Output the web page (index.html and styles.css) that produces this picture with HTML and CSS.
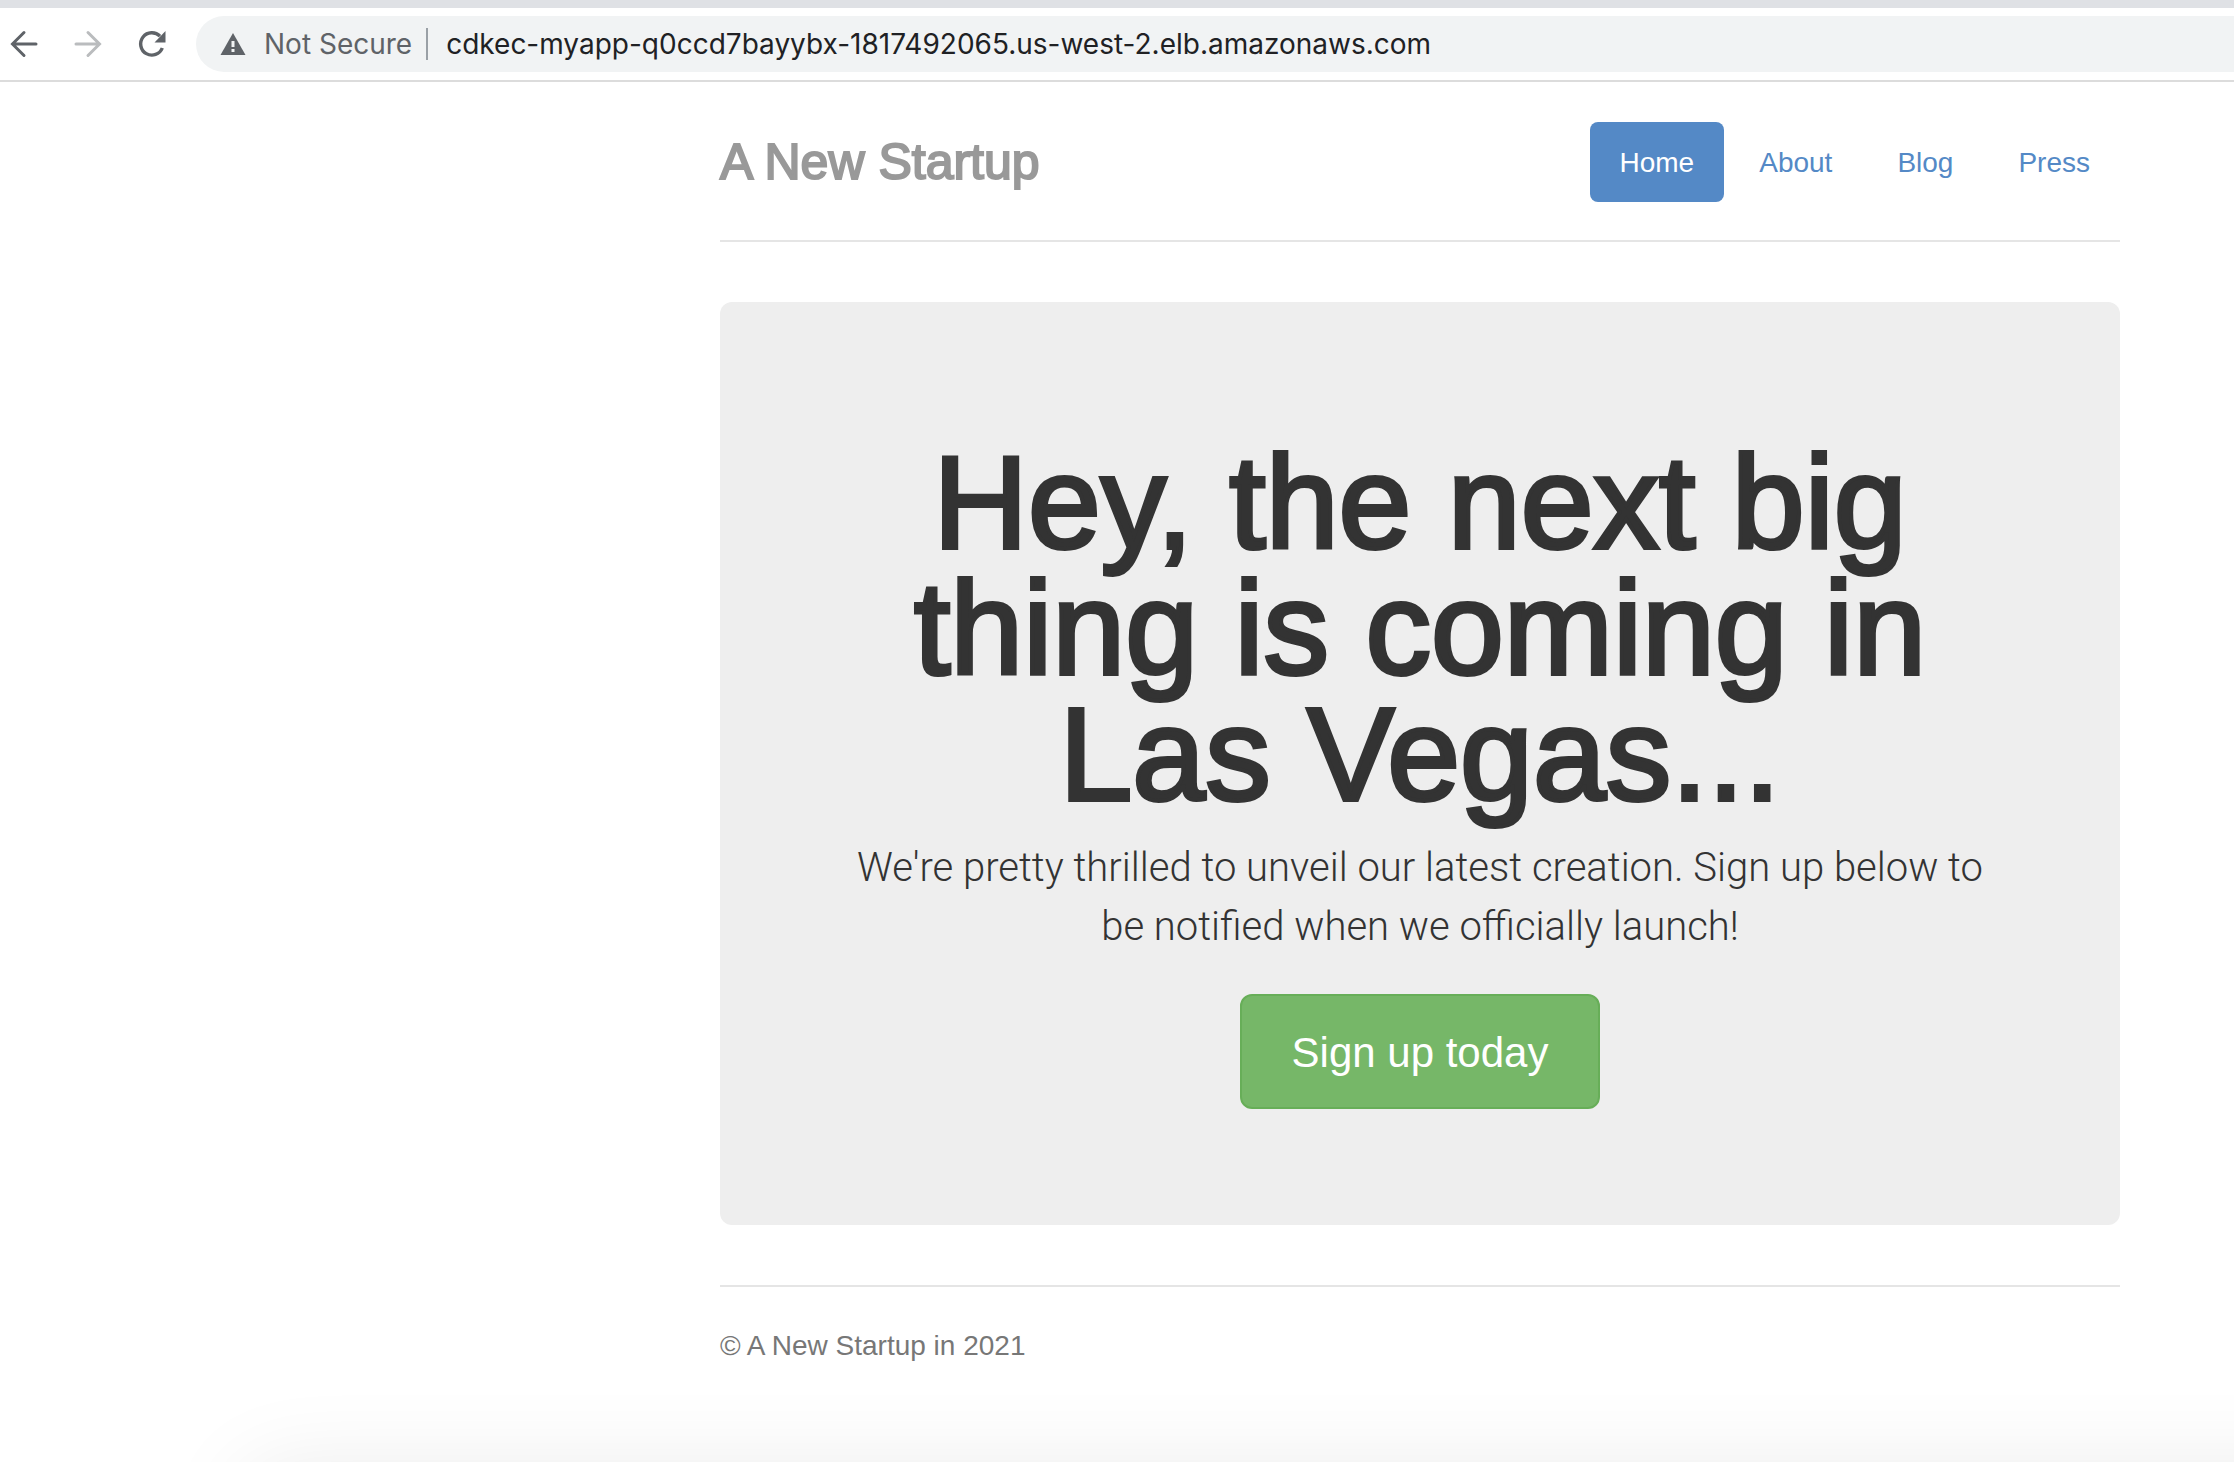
FILE: index.html
```
<!DOCTYPE html>
<html lang="en">
<head>
<meta charset="utf-8">
<meta name="viewport" content="width=device-width, initial-scale=1">
<title>A New Startup</title>
<link rel="stylesheet" href="styles.css">
</head>
<body>
<div class="toolbar">
  <button class="tool" type="button" aria-label="Back">
    <svg width="32" height="32" viewBox="0 0 32 32" fill="none" stroke="currentColor" stroke-width="3" stroke-linecap="round"><path d="M28 16H5M16 4.500L4.500 16L16 27.500"/></svg>
  </button>
  <button class="tool tool-off" type="button" aria-label="Forward" disabled>
    <svg width="32" height="32" viewBox="0 0 32 32" fill="none" stroke="currentColor" stroke-width="3" stroke-linecap="round"><path d="M4 16H27M16 4.500L27.500 16L16 27.500"/></svg>
  </button>
  <button class="tool" type="button" aria-label="Reload">
    <svg width="32" height="32" viewBox="0 0 32 32"><path d="M26.300 20A11.200 11.200 0 1 1 24 8.200" fill="none" stroke="currentColor" stroke-width="3.400"/><path d="M29.500 3V14.500H18.500Z" fill="currentColor"/></svg>
  </button>
  <div class="omnibox">
    <svg class="warning" width="26" height="24" viewBox="0 0 26 24"><path d="M13 1L25.500 23H.500Z" fill="currentColor"/><path d="M11.500 9h3v6h-3zM11.500 17h3v3h-3z" fill="#f1f3f4"/></svg>
    <label class="security" for="address">Not Secure</label>
    <input class="address" id="address" type="text" value="cdkec-myapp-q0ccd7bayybx-1817492065.us-west-2.elb.amazonaws.com">
  </div>
</div>
<div class="container">
  <header class="header">
    <h3 class="brand">A New Startup</h3>
    <nav class="nav">
      <a class="nav-link active" href="#">Home</a>
      <a class="nav-link" href="#about">About</a>
      <a class="nav-link" href="#blog">Blog</a>
      <a class="nav-link" href="#press">Press</a>
    </nav>
  </header>
  <main class="jumbotron">
    <h1 class="headline">Hey, the next big thing is coming in Las Vegas...</h1>
    <p class="lead">We're pretty thrilled to unveil our latest creation. Sign up below to be notified when we officially launch!</p>
    <button class="signup" type="button">Sign up today</button>
  </main>
  <footer class="footer">© A New Startup in 2021</footer>
</div>
<div class="window-shadow"></div>
</body>
</html>
```
FILE: styles.css
```
* {
  box-sizing: border-box;
}

body {
  margin: 0;
  min-height: 100vh;
  background: #fff;
  color: #333;
  font-family: "Liberation Sans", Arial, sans-serif;
  font-size: 28px;
  line-height: 40px;
}

.toolbar {
  display: flex;
  align-items: center;
  gap: 32px;
  padding: 8px 0 8px 8px;
  border-top: 8px solid #dfe1e5;
  border-bottom: 2px solid #dcdcdc;
}

.tool {
  display: flex;
  padding: 0;
  border: 0;
  background: none;
  color: #5f6368;
}

.tool-off {
  color: #babcbe;
}

.omnibox {
  display: flex;
  flex: 1;
  align-items: center;
  height: 56px;
  margin-left: -4px;
  padding-left: 24px;
  border-radius: 28px 0 0 28px;
  background: #f1f3f4;
  color: #5f6368;
  font-family: Inter, sans-serif;
  font-size: 28px;
  line-height: 32px;
}

.security {
  margin-left: 18px;
  padding-right: 14px;
  border-right: 2px solid #9aa0a6;
}

.address {
  flex: 1;
  min-width: 0;
  padding: 0 0 0 18px;
  border: 0;
  outline: 0;
  background: none;
  color: #202124;
  font: inherit;
}

.container {
  max-width: 1400px;
  margin: 0 114px 0 auto;
  padding-top: 40px;
}

.header {
  display: flex;
  align-items: center;
  justify-content: space-between;
  padding-bottom: 38px;
  border-bottom: 2px solid #e5e5e5;
}

.brand {
  margin: 0;
  color: #999;
  font-size: 50px;
  font-weight: 400;
  line-height: 80px;
  -webkit-text-stroke: 2px currentColor;
}

.nav {
  display: flex;
  gap: 5px;
}

.nav-link {
  padding: 21px 30px 19px;
  border-radius: 8px;
  color: #5489c6;
  text-decoration: none;
}

.nav-link.active {
  background: #5489c6;
  color: #fff;
}

.jumbotron {
  margin: 60px 0;
  padding: 138px 120px 116px;
  border-radius: 12px;
  background: #eee;
  text-align: center;
}

.headline {
  margin: 0 0 20px;
  font-size: 131px;
  font-weight: 400;
  line-height: 126px;
  -webkit-text-stroke: 4px currentColor;
}

.lead {
  margin: 0 0 38px;
  font-family: Roboto, sans-serif;
  font-size: 40px;
  font-weight: 300;
  line-height: 59px;
}

.signup {
  padding: 29px 50px 27px;
  border: 2px solid #67ae58;
  border-radius: 12px;
  background: #76b768;
  color: #fff;
  font-family: inherit;
  font-size: 42px;
  line-height: 55px;
}

.footer {
  padding: 39px 0;
  border-top: 2px solid #e5e5e5;
  color: #777;
}

/* Soft shadow cast by the window below the fold */
.window-shadow {
  position: fixed;
  top: 100%;
  left: 240px;
  right: -120px;
  height: 200px;
  border-radius: 40px;
  box-shadow: 0 4px 88px rgba(0, 0, 0, 0.08);
  pointer-events: none;
}
```
